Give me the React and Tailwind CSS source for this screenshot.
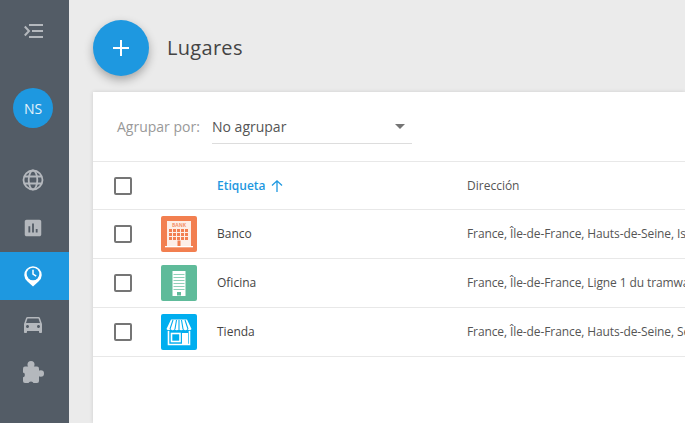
import React from "react";
import { MdAssessment, MdDirectionsCar } from "react-icons/md";

const Box = () => <div className="w-[18px] h-[18px] rounded-[2px] border-2 border-[#757575] bg-white" />;

const Bank = () => (
  <svg width="36" height="36" viewBox="0 0 36 36">
    <rect width="36" height="36" rx="2" fill="#f27f50" />
    <rect x="6" y="5" width="24" height="25" fill="#fdeee7" />
    <text x="18" y="10.500" textAnchor="middle" fontSize="5" fontWeight="700" fontFamily="Open Sans, sans-serif" fill="#f4936c">BANK</text>
    <g fill="#f27f50">
      {[8, 12, 16, 20, 24].map((x) =>
        [13, 17, 21].map((y) => <rect key={x + "-" + y} x={x} y={y} width="3" height="3" />)
      )}
      <rect x="16.500" y="24.500" width="3" height="5.500" />
    </g>
    <rect x="4" y="30" width="28" height="1.300" fill="#fff" />
  </svg>
);

const Office = () => (
  <svg width="36" height="36" viewBox="0 0 36 36">
    <rect width="36" height="36" rx="2" fill="#5fbb9a" />
    <rect x="11.500" y="6" width="13" height="25" fill="#fff" />
    <g fill="#8fd0b8">
      {[9, 12, 15, 18, 21, 24].map((y) => <rect key={y} x="12.500" y={y} width="11" height="1" />)}
    </g>
    <rect x="16" y="27" width="4" height="3.500" fill="#5fbb9a" />
  </svg>
);

const Shop = () => (
  <svg width="36" height="36" viewBox="0 0 36 36">
    <rect width="36" height="36" rx="2" fill="#00aeef" />
    <path d="M10 5.500h16l4.500 9.500q-2 2.500-4 0q-2 2.500-4.200 0q-2 2.500-4.300 0q-2.300 2.500-4.300 0q-2 2.500-4.200 0q-2 2.500-4 0z" fill="#fff" />
    <path d="M12 6l-3 9M15.500 6l-1.500 9M18 6v9M20.500 6l1.500 9M24 6l3 9" stroke="#00aeef" strokeWidth="1.100" />
    <path d="M7.500 17v13.500h21V17" fill="none" stroke="#fff" strokeWidth="1.600" />
    <rect x="10.500" y="19.500" width="8.500" height="8" fill="none" stroke="#fff" strokeWidth="1.600" />
    <rect x="21" y="19" width="6" height="11" fill="#fff" />
  </svg>
);

const Sort = () => (
  <svg width="14" height="14" viewBox="0 0 14 14" fill="none" stroke="#1e98e0" strokeWidth="1.300">
    <path d="M7 13V2M2 6.500 7 1.800l5 4.700" />
  </svg>
);

const Globe = () => (
  <svg width="22" height="22" viewBox="0 0 22 22" fill="none" stroke="#b4b8bd" strokeWidth="1.800">
    <circle cx="11" cy="11" r="9.500" />
    <ellipse cx="11" cy="11" rx="4.300" ry="9.500" />
    <path d="M2 7.500h18M2 14.500h18" />
  </svg>
);

const Pin = () => (
  <svg width="18" height="22" viewBox="0 0 18 22">
    <path d="M9 21.500 3.500 16.600A8.700 8.700 0 1 1 14.500 16.600z" fill="#fff" />
    <circle cx="9" cy="9" r="6.300" fill="#1e98e0" />
    <path d="M9 4.800V9l3.200 2.200" fill="none" stroke="#fff" strokeWidth="1.500" />
  </svg>
);

const Puzzle = () => (
  <svg width="22" height="22" viewBox="0 0 22 22">
    <g fill="#b4b8bd">
      <rect x="1" y="5.500" width="16" height="16.500" rx="2" />
      <circle cx="9" cy="3.500" r="3.500" />
      <circle cx="18.800" cy="12.500" r="3.200" />
    </g>
    <circle cx="9" cy="23" r="2.600" fill="#535c66" />
    <circle cx="0.500" cy="14" r="2.400" fill="#535c66" />
  </svg>
);

const Row = ({ icon, name, addr }) => (
  <div className="flex items-center h-[49px] border-b border-[#e8e8e8]">
    <div className="w-[68px] pl-[21px] shrink-0"><Box /></div>
    <div className="w-[56px] shrink-0 flex">{icon}</div>
    <div className="w-[250px] shrink-0 text-[12px] text-[#444]">{name}</div>
    <div className="whitespace-nowrap text-[12px] tracking-[-0.1px] text-[#555]">{addr}</div>
  </div>
);

const NavItem = ({ children, active }) => (
  <div className={"h-12 pr-[3px] flex items-center justify-center " + (active ? "bg-[#1e98e0]" : "")}>{children}</div>
);

export default function App() {
  return (
    <div className="w-[685px] h-[423px] overflow-hidden flex bg-[#ebebeb] font-['Open_Sans',sans-serif]">
      <aside className="w-[69px] shrink-0 bg-[#535c66] flex flex-col">
        <div className="h-[62px] pr-[3px] flex items-center justify-center">
          <svg width="19" height="14" viewBox="0 0 19 14" fill="none" stroke="#b4b8bd" strokeWidth="2">
            <path d="M5 1h14M8 7h11M5 13h14M.8 2.500 5 7 .8 11.500" />
          </svg>
        </div>
        <div className="mt-[26px] ml-[13px] h-10 w-10 rounded-full bg-[#1e98e0] flex items-center justify-center text-[#e4f2fb] text-[14px] font-medium">NS</div>
        <nav className="mt-7">
          <NavItem><Globe /></NavItem>
          <NavItem><MdAssessment size={22} color="#b4b8bd" /></NavItem>
          <NavItem active><Pin /></NavItem>
          <NavItem><MdDirectionsCar size={24} color="#b4b8bd" /></NavItem>
          <NavItem><Puzzle /></NavItem>
        </nav>
      </aside>
      <main className="flex-1 min-w-0 flex flex-col pl-6">
        <header className="h-[92px] flex items-center shrink-0 pt-1">
          <div className="w-14 h-14 rounded-full bg-[#1e98e0] shadow-[0_4px_10px_rgba(0,0,0,0.3)] flex items-center justify-center">
            <svg width="16" height="16" viewBox="0 0 16 16" stroke="#fff" strokeWidth="2"><path d="M8 0v16M0 8h16" /></svg>
          </div>
          <h1 className="ml-[18px] text-[20px] font-medium tracking-[0.3px] text-[#444]">Lugares</h1>
        </header>
        <section className="flex-1 bg-white shadow-[0_0_4px_rgba(0,0,0,0.12)]">
          <div className="h-[70px] flex items-center border-b border-[#e8e8e8] pl-6">
            <span className="text-[14px] text-[#999] w-[95px] shrink-0">Agrupar por:</span>
            <div className="w-[200px] h-[33px] mt-[2px] pb-[2px] flex items-center justify-between border-b border-[#ddd] text-[14px] text-[#555]">
              <span>No agrupar</span>
              <span className="w-0 h-0 mr-[7px] border-x-[5px] border-x-transparent border-t-[5px] border-t-[#757575]" />
            </div>
          </div>
          <div className="flex items-center h-12 border-b border-[#e8e8e8]">
            <div className="w-[124px] pl-[21px] shrink-0"><Box /></div>
            <div className="w-[250px] shrink-0 flex items-center gap-[4px] text-[12px] font-semibold text-[#1e98e0]">Etiqueta <Sort /></div>
            <div className="text-[12px] font-medium text-[#555]">Dirección</div>
          </div>
          <Row icon={<Bank />} name="Banco" addr="France, Île-de-France, Hauts-de-Seine, Issy-les-Moulineaux" />
          <Row icon={<Office />} name="Oficina" addr="France, Île-de-France, Ligne 1 du tramway" />
          <Row icon={<Shop />} name="Tienda" addr="France, Île-de-France, Hauts-de-Seine, Sèvres" />
        </section>
      </main>
    </div>
  );
}
